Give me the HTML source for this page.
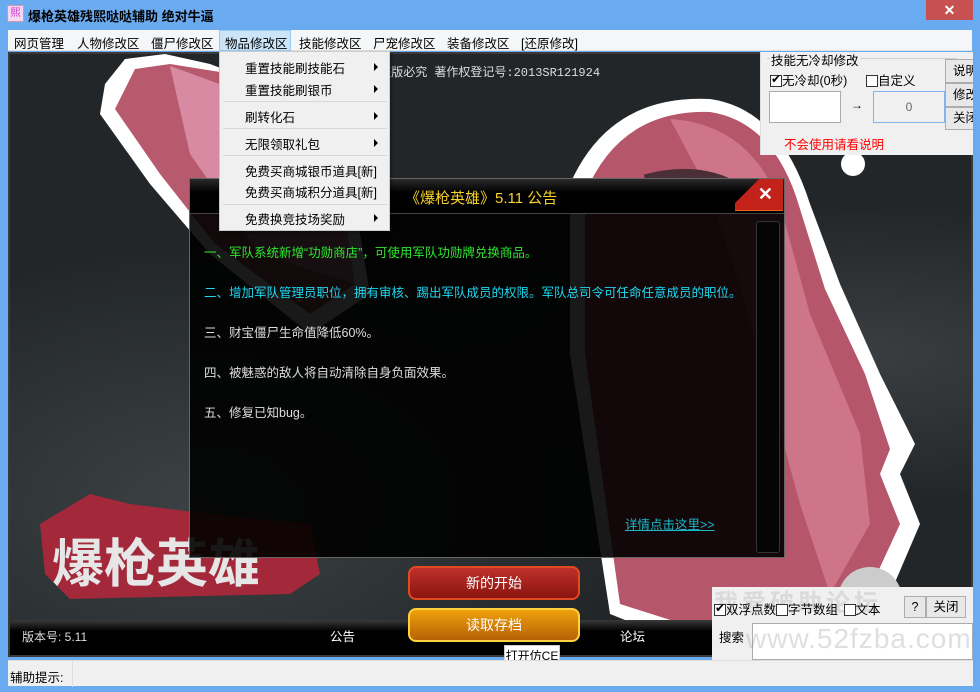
<!DOCTYPE html>
<html><head><meta charset="utf-8">
<style>
*{margin:0;padding:0;box-sizing:border-box}
body{width:980px;height:692px;overflow:hidden;background:#6aaaf0;font-family:"Liberation Sans","Noto Sans CJK SC",sans-serif;font-size:12px;position:relative}
.a{position:absolute;white-space:nowrap}
.menu span{position:absolute;top:3px;color:#000;font-size:12.5px}
.dd div{position:absolute;left:25px;font-size:12.5px;color:#000}
.dd i{position:absolute;left:154px;width:0;height:0;border-top:4px solid transparent;border-bottom:4px solid transparent;border-left:4px solid #000}
.dd hr{position:absolute;left:3px;width:164px;border:0;border-top:1px solid #d8d8d8}
.txt{position:absolute;left:14px;font-size:12.5px;white-space:nowrap}
.btn{position:absolute;background:#e8e8e8;border:1px solid #adadad;font-size:12.5px;text-align:center;white-space:nowrap;overflow:hidden}
.cb{display:inline-block;width:12px;height:12px;border:1px solid #333;background:#fff;vertical-align:-2px;position:relative}
</style></head><body>
<div class="a" style="left:7px;top:5px;width:17px;height:17px;background:#f6d6f0;border:1px solid #c9a;font-size:10px;color:#c3c;line-height:15px;text-align:center">熙</div>
<div class="a" style="left:28px;top:6px;font-size:13px;font-weight:bold;color:#000">爆枪英雄残熙哒哒辅助 绝对牛逼</div>
<div class="a" style="left:926px;top:0;width:47px;height:20px;background:#c75050;color:#fff;font-size:14px;text-align:center;line-height:20px;font-weight:bold">✕</div>
<div class="a menu" style="left:8px;top:30px;width:964px;height:21px;background:#f5f6f7;border-bottom:1px solid #e0e0e0">
<span style="left:6px">网页管理</span><span style="left:69px">人物修改区</span><span style="left:143px">僵尸修改区</span>
<div class="a" style="left:211px;top:0;width:72px;height:21px;background:#cce4f7;border:1px solid #99c9ef"></div>
<span style="left:217px">物品修改区</span><span style="left:291px">技能修改区</span><span style="left:365px">尸宠修改区</span><span style="left:439px">装备修改区</span><span style="left:513px">[还原修改]</span>
</div>
<div class="a" style="left:8px;top:52px;width:965px;height:605px;background:#222628;overflow:hidden;border:2px solid #3a3a3a">
<div class="a" style="left:0;top:0;width:100%;height:100%;background:radial-gradient(ellipse at 20% 75%,#3c4244 0%,transparent 40%),radial-gradient(ellipse at 88% 50%,#3a3e40 0%,transparent 35%)"></div>
<svg class="a" style="left:0;top:0" width="965" height="605">
<path d="M115 5 L155 0 L200 10 L330 60 L360 240 L300 280 L200 200 L140 130 L90 60 L95 30 Z" fill="#fff"/>
<path d="M125 15 L160 10 L210 18 L320 70 L345 230 L300 260 L205 190 L150 120 L105 55 Z" fill="#b85a6e"/>
<path d="M160 12 L320 70 L345 230 L250 200 L180 100 Z" fill="#d98aa3"/>
<!-- hair -->
<path d="M560 130 Q600 40 700 45 Q770 55 800 150 L830 230 L870 320 L905 390 L890 420 L910 470 L880 540 L820 585 L700 600 L600 560 L560 300 Z" fill="#fff"/>
<path d="M575 140 Q610 55 700 58 Q765 68 790 155 L815 235 L855 320 L880 395 L870 420 L890 470 L860 535 L810 570 L720 585 L610 550 L575 300 Z" fill="#b5566a"/>
<path d="M660 65 Q740 70 770 150 L800 260 L850 380 L860 470 L820 540 L790 450 L760 340 L730 230 L700 140 Z" fill="#cf7589"/>
<path d="M635 125 Q690 110 730 135" stroke="#4a2e38" stroke-width="9" fill="none"/>
<circle cx="862" cy="84" r="10" fill="#fff"/><circle cx="843" cy="110" r="12" fill="#fff"/>
<circle cx="860" cy="545" r="32" fill="#ccc"/>
<path d="M30 470 L80 440 L120 450 L200 460 L300 470 L310 520 L280 540 L60 545 L35 520 Z" fill="#a3283a"/>
<text x="42" y="528" font-size="52" font-weight="bold" fill="#e6e6e6" font-family="Noto Sans CJK SC,sans-serif">爆枪英雄</text>
<text x="350" y="22" font-size="12" fill="#ddd" font-family="Liberation Mono,Noto Sans CJK SC,monospace">有 盗版必究 著作权登记号:2013SR121924</text>
</svg>
<div class="a" style="left:0;top:566px;width:965px;height:37px;background:linear-gradient(#3a3a3a,#000 30%,#000)"></div>
<div class="a" style="left:12px;top:574px;color:#ddd;font-size:12px">版本号: 5.11</div>
<div class="a" style="left:320px;top:572px;color:#fff;font-size:12.5px">公告</div>
<div class="a" style="left:610px;top:572px;color:#fff;font-size:12.5px">论坛</div>
<div class="a" style="left:398px;top:512px;width:172px;height:34px;border-radius:8px;background:linear-gradient(#c0302a,#8a1410);border:2px solid #e24a20;color:#fff;font-size:14px;text-align:center;line-height:30px">新的开始</div>
<div class="a" style="left:398px;top:554px;width:172px;height:34px;border-radius:8px;background:linear-gradient(#eea20a,#b86008);border:2px solid #ffd040;color:#fff;font-size:14px;text-align:center;line-height:30px">读取存档</div>
</div>
<div class="a" style="left:189px;top:178px;width:596px;height:380px;border:1px solid #666;background:rgba(0,0,0,0.9)">
<div class="a" style="left:0;top:0;width:594px;height:35px;background:linear-gradient(#2a2a2a,#000 40%);border-bottom:1px solid #444"></div>
<div class="a" style="left:215px;top:8px;color:#f7d229;font-size:15px">《爆枪英雄》5.11 公告</div>
<div class="a" style="left:545px;top:0;width:48px;height:32px;background:linear-gradient(135deg,transparent 30%,#c2221a 31%);border-bottom:1px solid #f06020;color:#fff;font-size:18px;font-weight:bold;text-align:right;padding-right:10px;line-height:30px">✕</div>
<div class="a" style="left:566px;top:42px;width:24px;height:332px;border:1px solid #333;border-radius:3px;background:#050505"></div>
<div class="txt" style="top:63px;color:#2ee82e">一、军队系统新增“功勋商店”，可使用军队功勋牌兑换商品。</div>
<div class="txt" style="top:103px;color:#1ed8f0">二、增加军队管理员职位，拥有审核、踢出军队成员的权限。军队总司令可任命任意成员的职位。</div>
<div class="txt" style="top:143px;color:#ddd">三、财宝僵尸生命值降低60%。</div>
<div class="txt" style="top:183px;color:#ddd">四、被魅惑的敌人将自动清除自身负面效果。</div>
<div class="txt" style="top:223px;color:#ddd">五、修复已知bug。</div>
<div class="txt" style="left:435px;top:335px;color:#1eb8c8;text-decoration:underline">详情点击这里&gt;&gt;</div>
</div>
<div class="a dd" style="left:219px;top:51px;width:171px;height:180px;background:#f0f0f0;border:1px solid #ccc;box-shadow:2px 2px 3px rgba(0,0,0,.3)">
<div style="top:6px">重置技能刷技能石</div><i style="top:11px"></i>
<div style="top:28px">重置技能刷银币</div><i style="top:33px"></i>
<hr style="top:49px">
<div style="top:55px">刷转化石</div><i style="top:60px"></i>
<hr style="top:76px">
<div style="top:82px">无限领取礼包</div><i style="top:87px"></i>
<hr style="top:103px">
<div style="top:109px">免费买商城银币道具[新]</div>
<div style="top:130px">免费买商城积分道具[新]</div>
<hr style="top:152px">
<div style="top:157px">免费换竞技场奖励</div><i style="top:162px"></i>
</div>
<div class="a" style="left:760px;top:52px;width:213px;height:103px;background:#f0f0f0;border-left:1px solid #ddd;overflow:hidden">
<div class="a" style="left:6px;top:6px;width:190px;border-top:1px solid #d0d0d0"></div>
<div class="a" style="left:9px;top:-2px;background:#f0f0f0;padding:0 1px;font-size:12.5px">技能无冷却修改</div>
<div class="a" style="left:9px;top:18px;font-size:12.5px"><span class="cb"><span style="position:absolute;left:0;top:-4px;font-size:12px">✔</span></span>无冷却(0秒)</div>
<div class="a" style="left:105px;top:18px;font-size:12.5px"><span class="cb"></span>自定义</div>
<div class="a" style="left:8px;top:39px;width:72px;height:32px;background:#fff;border:1px solid #aaa"></div>
<div class="a" style="left:90px;top:46px;font-size:12px">→</div>
<div class="a" style="left:112px;top:39px;width:72px;height:32px;background:#f0f0f0;border:1px solid #7eb4ea;text-align:center;line-height:30px;color:#666">0</div>
<div class="btn" style="left:184px;top:7px;width:40px;height:24px;line-height:22px;text-align:left;padding-left:7px">说明</div>
<div class="btn" style="left:184px;top:31px;width:40px;height:24px;line-height:22px;text-align:left;padding-left:7px">修改</div>
<div class="btn" style="left:184px;top:55px;width:40px;height:23px;line-height:21px;text-align:left;padding-left:7px">关闭</div>
<div class="a" style="left:23px;top:82px;color:#f00;font-size:12.5px">不会使用请看说明</div>
</div>
<div class="a" style="left:712px;top:587px;width:261px;height:73px;background:#f0f0f0;overflow:hidden">
<div class="a" style="left:2px;top:-4px;font-size:24px;font-weight:bold;color:rgba(150,150,150,.25);letter-spacing:4px">我爱破助论坛</div>
<div class="a" style="left:2px;top:12px;font-size:12.5px"><span class="cb"><span style="position:absolute;left:0;top:-4px;font-size:12px">✔</span></span>双浮点数<span class="cb"></span>字节数组 <span class="cb" style="margin-left:2px"></span>文本</div>
<div class="btn" style="left:192px;top:9px;width:22px;height:22px;line-height:20px">?</div>
<div class="btn" style="left:214px;top:9px;width:40px;height:22px;line-height:20px">关闭</div>
<div class="a" style="left:7px;top:40px;font-size:12.5px">搜索</div>
<div class="a" style="left:40px;top:36px;width:221px;height:37px;background:#fff;border:1px solid #aaa"></div>
<div class="a" style="left:34px;top:36px;font-size:28px;color:rgba(150,150,150,.3);letter-spacing:1px">www.52fzba.com</div>
</div>
<div class="a" style="left:504px;top:645px;width:56px;height:22px;background:#fff;border:1px solid #ccc;font-size:12px;text-align:center;line-height:20px">打开仿CE</div>
<div class="a" style="left:8px;top:660px;width:965px;height:26px;background:#f0f0f0;border-top:1px solid #ddd">
<div class="a" style="left:2px;top:6px;font-size:12.5px">辅助提示:</div>
<div class="a" style="left:64px;top:0;height:26px;border-left:1px solid #ddd"></div>
</div>
</body></html>
